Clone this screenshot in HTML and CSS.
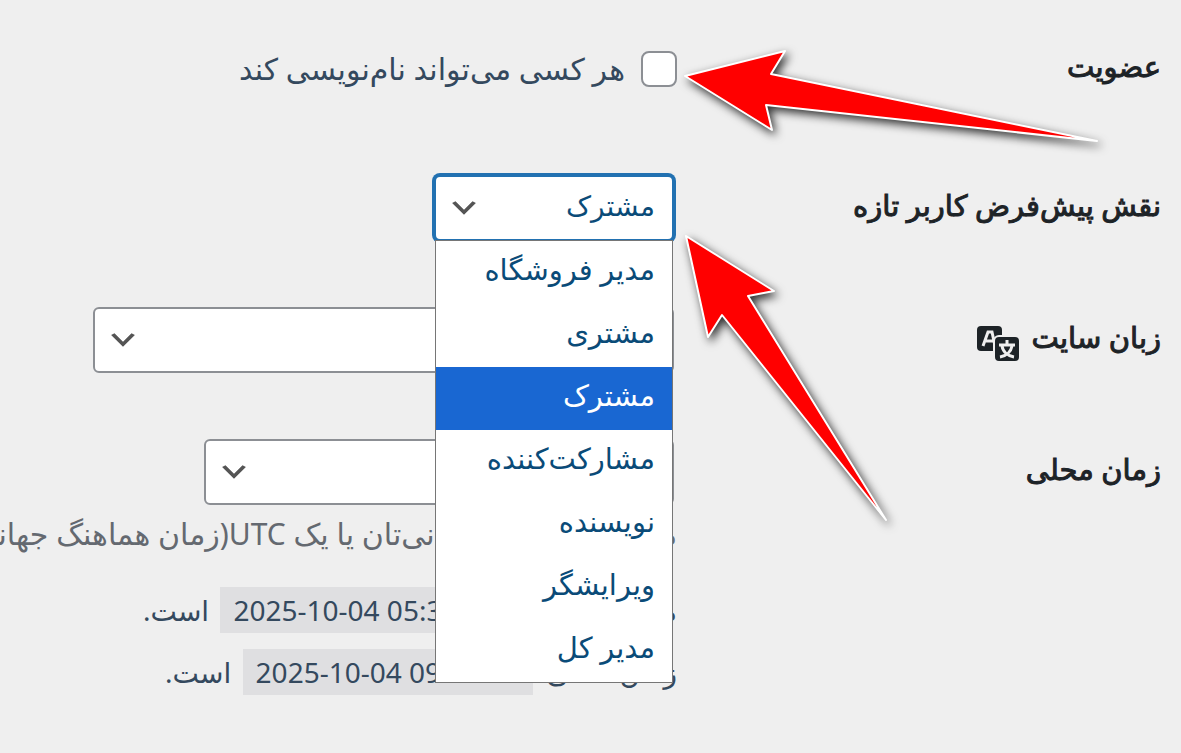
FILE: index.html
```html
<!DOCTYPE html>
<html lang="fa" dir="rtl">
<head>
    <meta charset="UTF-8">
    <meta name="viewport" content="width=device-width, initial-scale=1.0">
    <title>تنظیمات عمومی</title>
    <link rel="stylesheet" href="styles.css">
</head>
<body>
    <form class="settings">
        <div class="row first">
            <div class="heading">عضویت</div>
            <div class="field">
                <label class="check-label" for="register">
                    <input class="check" id="register" type="checkbox">
                    هر کسی می‌تواند نام‌نویسی کند
                </label>
            </div>
        </div>

        <div class="row">
            <label class="heading" for="role">نقش پیش‌فرض کاربر تازه</label>
            <div class="field">
                <div class="dropdown">
                    <select class="select role" id="role">
                        <option>مشترک</option>
                    </select>
                    <ul class="menu" role="listbox" aria-label="نقش">
                        <li role="option">مدیر فروشگاه</li>
                        <li role="option">مشتری</li>
                        <li class="active" role="option" aria-selected="true">مشترک</li>
                        <li role="option">مشارکت‌کننده</li>
                        <li role="option">نویسنده</li>
                        <li role="option">ویرایشگر</li>
                        <li role="option">مدیر کل</li>
                    </ul>
                </div>
            </div>
        </div>

        <div class="row">
            <label class="heading" for="language">زبان سایت
                <svg class="lang-icon" viewBox="0 0 44 36" width="44" height="36" aria-hidden="true">
                    <rect x="1" y="0" width="25" height="25" rx="4" fill="#1d2327"/>
                    <path d="M7 20 L12 6 H16 L19 20 M10 15 H17" fill="none" stroke="#efefef" stroke-width="3"/>
                    <rect x="18" y="10" width="26" height="26" rx="5" fill="#1d2327" stroke="#efefef" stroke-width="2"/>
                    <path d="M31 14 V19 M23 19 H39 M26 20 C27 26 32 30 38 31 M36 20 C35 26 30 30 24 31" fill="none" stroke="#efefef" stroke-width="3"/>
                </svg>
            </label>
            <div class="field">
                <select class="select language" id="language"></select>
            </div>
        </div>

        <div class="row">
            <label class="heading" for="timezone">زمان محلی</label>
            <div class="field">
                <select class="select timezone" id="timezone"></select>
                <p class="description">محلی در منطقه زمانی‌تان یا یک UTC(زمان هماهنگ جهانی)</p>
                <p class="time">منطقه جهانی <code>2025-10-04 05:37:02</code> است.</p>
                <p class="time">زمان محلی <code>2025-10-04 09:07:02</code> است.</p>
            </div>
        </div>

        <svg class="arrows" viewBox="680 0 501 560" width="501" height="560" aria-hidden="true">
            <polygon points="685,76 785,51 771,74 1097,141 766,105 772,130"/>
            <polygon points="686,236 774,291 748,296 886,520 722,315 708,337"/>
        </svg>
    </form>
</body>
</html>
```

FILE: styles.css
```css
* {
    box-sizing: border-box;
}

body {
    margin: 0;
    overflow: hidden;
    background: #efefef;
    color: #34495e;
    font-family: "Noto Sans", "DejaVu Sans", sans-serif;
    font-size: 28px;
    line-height: 46px;
}

.settings {
    position: relative;
    padding: 36px 20px 0 0;
}

.row {
    display: grid;
    grid-template-columns: 484px minmax(0, 1fr);
    margin-bottom: 66px;
}

.first {
    margin-bottom: 73px;
}

.heading {
    padding-top: 7px;
    color: #1d2327;
    font-size: 29px;
    -webkit-text-stroke: 1px #1d2327;
}

.lang-icon {
    margin-right: 4px;
    vertical-align: -14px;
}

.field {
    min-height: 66px;
    white-space: nowrap;
}

.check-label {
    display: flex;
    align-items: center;
    gap: 16px;
    height: 66px;
    font-size: 30px;
}

.check {
    appearance: none;
    width: 36px;
    height: 36px;
    margin: 0;
    border: 2px solid #8c8f94;
    border-radius: 8px;
    background: #fff;
}

.dropdown {
    position: relative;
    width: 240px;
    margin-right: 3px;
}

.select {
    appearance: none;
    display: block;
    height: 66px;
    margin: 0 3px 0 0;
    padding: 0 17px 6px;
    border: 2px solid #8c8f94;
    border-radius: 6px;
    background: #fff url("data:image/svg+xml,%3Csvg xmlns='http://www.w3.org/2000/svg' width='34' height='34' viewBox='0 0 20 20'%3E%3Cpath d='M5 6l5 5 5-5 2 1-7 7-7-7 2-1z' fill='%23555'/%3E%3C/svg%3E") no-repeat left 11px center;
    color: #0a4b78;
    font: inherit;
}

.role {
    width: 240px;
    margin: 0;
    border-color: #2271b1;
    box-shadow: 0 0 0 2px #2271b1;
}

.language {
    width: 581px;
}

.timezone {
    width: 470px;
}

.menu {
    position: absolute;
    top: 65px;
    right: 1px;
    z-index: 1;
    width: 238px;
    margin: 0;
    padding: 0;
    border: 1px solid #767676;
    background: #fff;
    color: #0a4b78;
    font-size: 29px;
    line-height: 56px;
    list-style: none;
}

.menu li {
    height: 63px;
    padding: 0 17px;
}

.menu .active {
    background: #1967d2;
    color: #fff;
}

.description {
    margin: 6px 0 30px;
    color: #646970;
    font-size: 30px;
}

.time {
    margin: 0 0 16px;
}

.time code {
    display: inline-block;
    margin: 0 6px 0 4px;
    padding: 0 13px;
    background: #dfdfe1;
    direction: ltr;
    font-family: inherit;
}

.arrows {
    position: absolute;
    top: 0;
    right: 0;
    z-index: 2;
    pointer-events: none;
    fill: #f00;
    stroke: #fff;
    stroke-width: 2px;
    stroke-linejoin: round;
    filter: drop-shadow(3px 4px 5px rgba(0, 0, 0, 0.8));
}
```
